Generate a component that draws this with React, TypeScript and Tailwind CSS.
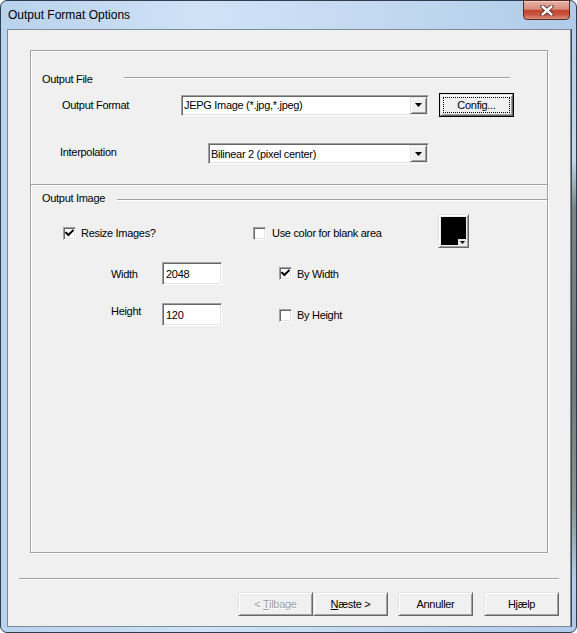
import React from 'react'

const raised =
  'border border-t-[#e3e3e3] border-l-[#e3e3e3] border-r-[#696969] border-b-[#696969] shadow-[inset_1px_1px_0_#fff,inset_-1px_-1px_0_#a0a0a0]'
const sunken =
  'border border-t-[#a0a0a0] border-l-[#a0a0a0] border-r-white border-b-white shadow-[inset_1px_1px_0_#696969,inset_-1px_-1px_0_#e3e3e3]'
const base = 'text-[11px] leading-[14px] tracking-[-0.3px] whitespace-nowrap'
const txt = `${base} text-black`

function Check({ checked }: { checked?: boolean }) {
  return (
    <span className={`flex h-[13px] w-[13px] shrink-0 items-center justify-center bg-white ${sunken}`}>
      {checked && (
        <svg width="9" height="9" viewBox="0 0 9 9">
          <path d="M1.2 3.8 L3.4 6 L7.8 1.6" fill="none" stroke="#000" strokeWidth="2" strokeLinecap="square" />
        </svg>
      )}
    </span>
  )
}

function Arrow() {
  return (
    <svg width="7" height="4" viewBox="0 0 7 4">
      <polygon points="0,0 7,0 3.5,4" fill="#000" />
    </svg>
  )
}

function Combo({ text, width }: { text: string; width: string }) {
  return (
    <div className={`flex h-[21px] items-center bg-white ${sunken} ${width}`}>
      <span className={`flex-1 pl-[2px] ${txt}`}>{text}</span>
      <span className={`mr-[1px] flex h-[17px] w-[17px] items-center justify-center bg-[#f0f0f0] ${raised}`}>
        <Arrow />
      </span>
    </div>
  )
}

function Field({ value }: { value: string }) {
  return (
    <div className={`flex h-[23px] w-[60px] items-center bg-white pl-[3px] ${sunken}`}>
      <span className={txt}>{value}</span>
    </div>
  )
}

function Etched({ className = '' }: { className?: string }) {
  return <div className={`h-[2px] border-t border-b border-t-[#a0a0a0] border-b-white ${className}`} />
}

function Btn({ children, disabled }: { children: React.ReactNode; disabled?: boolean }) {
  return (
    <div className={`flex h-[24px] w-[75px] items-center justify-center bg-[#f0f0f0] ${raised}`}>
      <span className={disabled ? `${base} text-[#a0a0a0] [text-shadow:1px_1px_0_#fff]` : txt}>{children}</span>
    </div>
  )
}

export default function App() {
  return (
    <div className="h-[633px] w-[577px] overflow-hidden bg-white font-['Liberation_Sans',Arial,sans-serif]">
      <div className="flex h-full w-full flex-col rounded-[7px] border border-[#2e3d4f] bg-[linear-gradient(90deg,#b9d2ed_0%,#cfe2f6_35%,#c3d9f1_65%,#b0cbe8_100%)]">
        {/* title bar */}
        <div className="flex h-[28px] shrink-0 items-start">
          <span className="mt-[6px] pl-[7px] text-[12px] leading-[16px] text-black">Output Format Options</span>
          <div className="ml-auto mr-[6px] -mt-[1px] flex h-[20px] w-[47px] items-center justify-center rounded-b-[4px] border border-[#5a2b24] bg-[linear-gradient(180deg,#e6b0a5_0%,#d98f80_45%,#c4462f_52%,#c85440_75%,#dc917c_100%)] shadow-[inset_0_1px_0_#f3cfc7]">
            <svg width="14" height="11" viewBox="0 0 14 11">
              <path d="M2.5 1.5 L11.5 9.5 M11.5 1.5 L2.5 9.5" stroke="#4a2a27" strokeWidth="4.2" strokeLinecap="round" />
              <path d="M2.5 1.5 L11.5 9.5 M11.5 1.5 L2.5 9.5" stroke="#fff" strokeWidth="2.4" strokeLinecap="round" />
            </svg>
          </div>
        </div>

        {/* frame + client */}
        <div className="flex flex-1 pb-[5px] pl-[6px]">
          <div className="flex flex-1 flex-col border border-[#7d8b9b] bg-[#f0f0f0]">
            {/* panel */}
            <div className="ml-[22px] mt-[20px] flex h-[503px] w-[518px] flex-col border border-[#a0a0a0] shadow-[1px_1px_0_#fff,inset_1px_1px_0_#fff]">
              {/* Output File heading */}
              <div className="mt-[21px] flex h-[14px] items-start pl-[11px]">
                <span className={`w-[82px] ${txt}`}>Output File</span>
                <Etched className="mt-[5px] w-[386px]" />
              </div>

              {/* Output Format row */}
              <div className="mt-[7px] flex h-[24px] items-center pl-[31px]">
                <span className={`w-[119px] ${txt}`}>Output Format</span>
                <Combo text="JEPG Image (*.jpg,*.jpeg)" width="w-[248px]" />
                <div className="ml-[10px] h-[24px] w-[75px] border border-black">
                  <div className={`flex h-full w-full bg-[#f0f0f0] p-[2px] ${raised}`}>
                    <div className="flex flex-1 items-center justify-center border border-dotted border-black">
                      <span className={txt}>Config...</span>
                    </div>
                  </div>
                </div>
              </div>

              {/* Interpolation row */}
              <div className="mt-[26px] flex h-[21px] items-start pl-[29px]">
                <span className={`mt-[2px] w-[148px] ${txt}`}>Interpolation</span>
                <Combo text="Bilinear 2 (pixel center)" width="w-[221px]" />
              </div>

              <Etched className="mt-[20px]" />

              {/* Output Image heading */}
              <div className="mt-[5px] flex h-[14px] items-start pl-[11px]">
                <span className={`w-[75px] ${txt}`}>Output Image</span>
                <Etched className="mt-[8px] flex-1" />
              </div>

              {/* checkboxes row */}
              <div className="mt-[9px] flex h-[34px] items-start pl-[32px]">
                <div className="mt-[12px] flex w-[190px] items-center">
                  <Check checked />
                  <span className={`ml-[5px] ${txt}`}>Resize Images?</span>
                </div>
                <div className="mt-[12px] flex w-[185px] items-center">
                  <Check />
                  <span className={`ml-[6px] ${txt}`}>Use color for blank area</span>
                </div>
                <div className={`flex h-[34px] w-[31px] bg-[#f0f0f0] p-[2px] ${raised}`}>
                  <div className="relative flex-1 bg-black">
                    <div className="absolute bottom-0 right-0 flex h-[6px] w-[8px] items-center justify-center bg-[#e8e8e8]">
                      <svg width="5" height="3" viewBox="0 0 5 3">
                        <polygon points="0,0 5,0 2.5,3" fill="#000" />
                      </svg>
                    </div>
                  </div>
                </div>
              </div>

              {/* Width row */}
              <div className="mt-[14px] flex h-[23px] items-center pl-[80px]">
                <span className={`w-[51px] ${txt}`}>Width</span>
                <Field value="2048" />
                <div className="ml-[57px] flex items-center">
                  <Check checked />
                  <span className={`ml-[5px] ${txt}`}>By Width</span>
                </div>
              </div>

              {/* Height row */}
              <div className="mt-[18px] flex h-[23px] items-start pl-[80px]">
                <span className={`mt-[1px] w-[51px] ${txt}`}>Height</span>
                <Field value="120" />
                <div className="ml-[57px] mt-[5px] flex items-center">
                  <Check />
                  <span className={`ml-[5px] ${txt}`}>By Height</span>
                </div>
              </div>
            </div>

            <Etched className="ml-[11px] mt-[25px] w-[540px]" />

            {/* buttons */}
            <div className="ml-[230px] mt-[12px] flex items-center">
              <Btn disabled>
                &lt; <span className="underline">T</span>ilbage
              </Btn>
              <Btn>
                <span className="underline">N</span>æste &gt;
              </Btn>
              <div className="ml-[10px]">
                <Btn>Annuller</Btn>
              </div>
              <div className="ml-[11px]">
                <Btn>Hjælp</Btn>
              </div>
            </div>
          </div>
          {/* right frame glass */}
          <div className="w-[5px] shrink-0 bg-[linear-gradient(180deg,#b5cde8_0%,#c4d6e8_22%,#7a8580_30%,#6f7a74_60%,#8a968e_80%,#b3cbe6_92%,#b0c9e6_100%)] shadow-[inset_1px_0_0_#3f4a52]" />
        </div>
      </div>
    </div>
  )
}
